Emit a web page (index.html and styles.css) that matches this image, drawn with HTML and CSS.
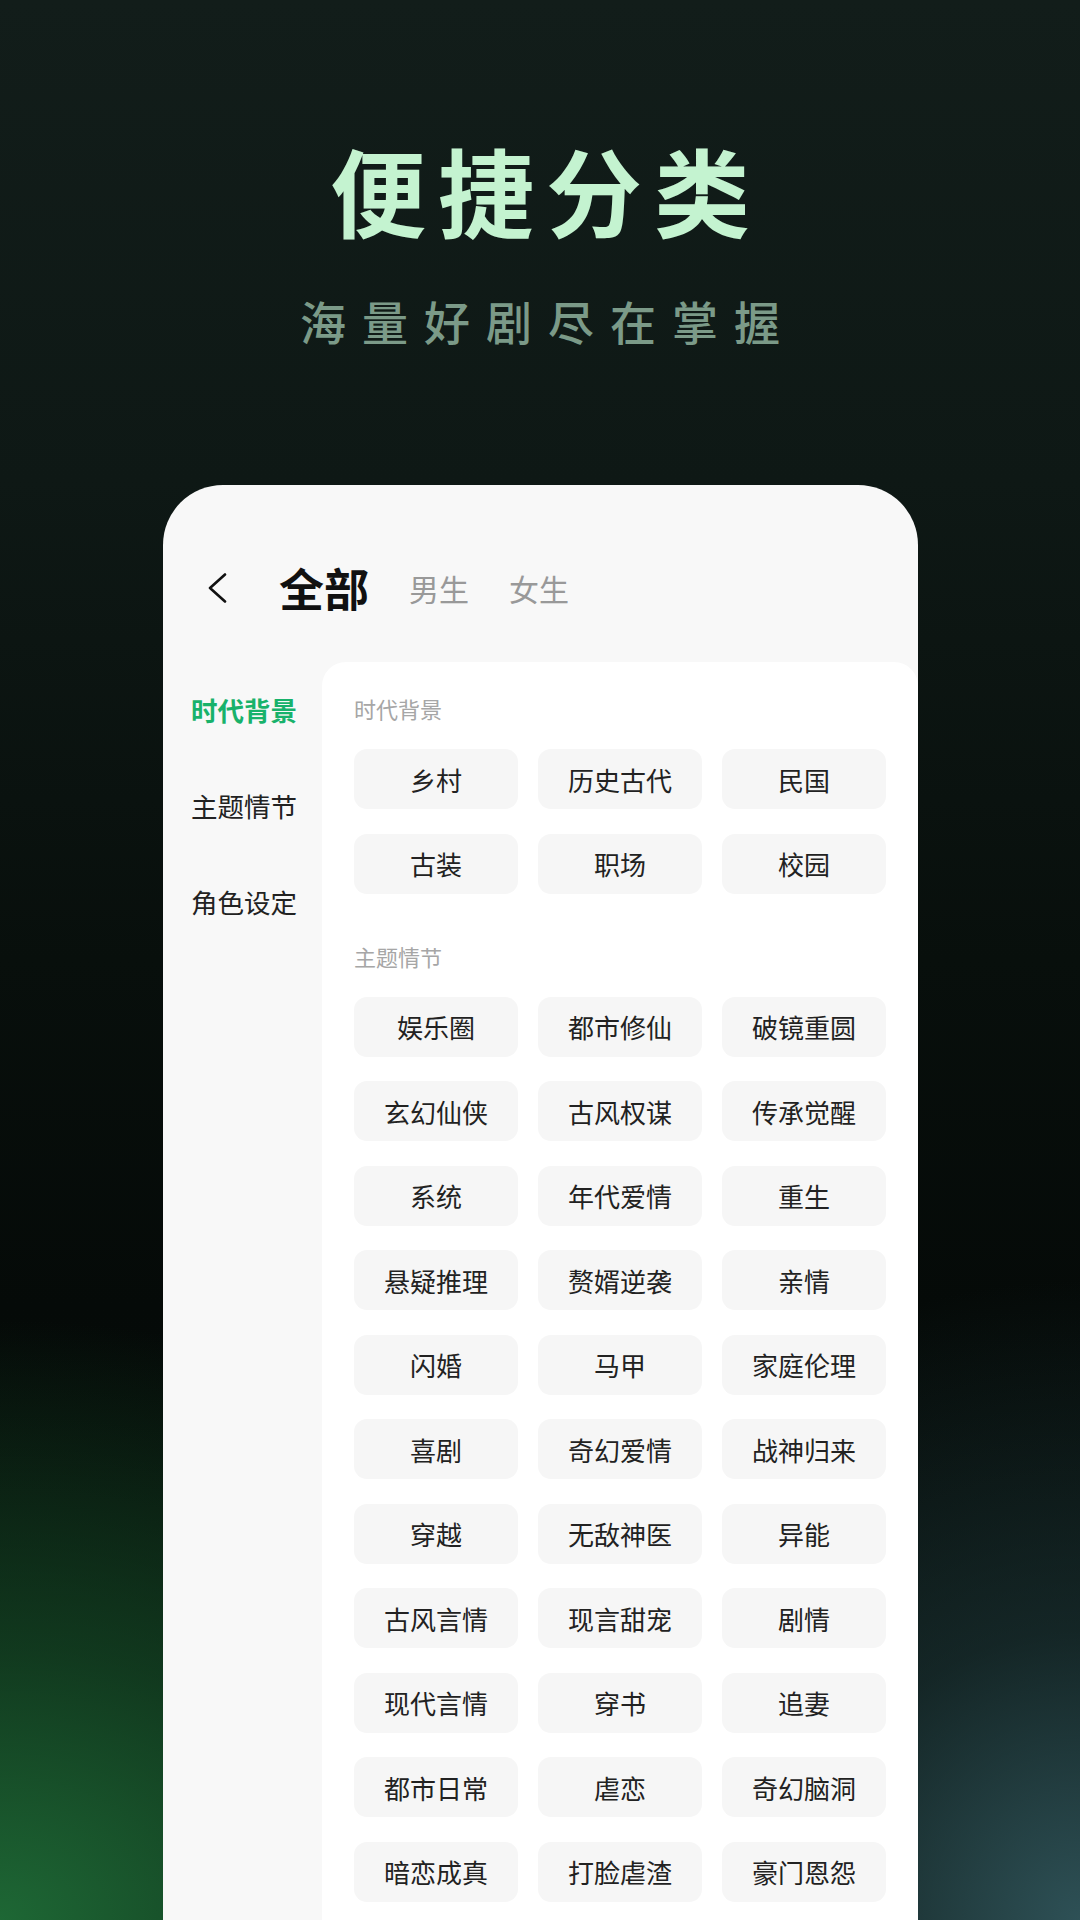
FILE: index.html
```html
<!DOCTYPE html>
<html lang="zh-CN">
<head>
<meta charset="utf-8">
<title>便捷分类</title>
<link rel="stylesheet" href="styles.css">
</head>
<body>
<div class="page">
  <header class="hero">
    <h1 class="title">便捷分类</h1>
    <p class="subtitle">海量好剧尽在掌握</p>
  </header>

  <section class="card">
    <div class="topbar">
      <svg class="back" viewBox="0 0 20 30" width="20" height="30" aria-hidden="true">
        <polyline points="18,1.5 3,15 18,28.5" fill="none" stroke="#111" stroke-width="2.6" stroke-linecap="round" stroke-linejoin="round"/>
      </svg>
      <span class="tab tab-active">全部</span>
      <span class="tab">男生</span>
      <span class="tab">女生</span>
    </div>

    <div class="content">
      <nav class="sidebar">
        <div class="side-item side-active">时代背景</div>
        <div class="side-item">主题情节</div>
        <div class="side-item">角色设定</div>
      </nav>

      <div class="panel">
        <div class="group">
          <div class="group-label">时代背景</div>
          <div class="chips">
            <div class="chip">乡村</div>
            <div class="chip">历史古代</div>
            <div class="chip">民国</div>
            <div class="chip">古装</div>
            <div class="chip">职场</div>
            <div class="chip">校园</div>
          </div>
        </div>

        <div class="group group-next">
          <div class="group-label">主题情节</div>
          <div class="chips">
            <div class="chip">娱乐圈</div>
            <div class="chip">都市修仙</div>
            <div class="chip">破镜重圆</div>
            <div class="chip">玄幻仙侠</div>
            <div class="chip">古风权谋</div>
            <div class="chip">传承觉醒</div>
            <div class="chip">系统</div>
            <div class="chip">年代爱情</div>
            <div class="chip">重生</div>
            <div class="chip">悬疑推理</div>
            <div class="chip">赘婿逆袭</div>
            <div class="chip">亲情</div>
            <div class="chip">闪婚</div>
            <div class="chip">马甲</div>
            <div class="chip">家庭伦理</div>
            <div class="chip">喜剧</div>
            <div class="chip">奇幻爱情</div>
            <div class="chip">战神归来</div>
            <div class="chip">穿越</div>
            <div class="chip">无敌神医</div>
            <div class="chip">异能</div>
            <div class="chip">古风言情</div>
            <div class="chip">现言甜宠</div>
            <div class="chip">剧情</div>
            <div class="chip">现代言情</div>
            <div class="chip">穿书</div>
            <div class="chip">追妻</div>
            <div class="chip">都市日常</div>
            <div class="chip">虐恋</div>
            <div class="chip">奇幻脑洞</div>
            <div class="chip">暗恋成真</div>
            <div class="chip">打脸虐渣</div>
            <div class="chip">豪门恩怨</div>
          </div>
        </div>
      </div>
    </div>
  </section>
</div>
</body>
</html>
```

FILE: styles.css
```css
* {
  box-sizing: border-box;
}

html, body {
  margin: 0;
  padding: 0;
}

body {
  width: 1080px;
  height: 1920px;
  overflow: hidden;
  font-family: "Noto Sans CJK SC", "Noto Sans", sans-serif;
  background-color: #070c0a;
  background-image:
    radial-gradient(ellipse 780px 600px at 0% 100%, rgba(31, 108, 55, 0.95) 0%, rgba(24, 86, 44, 0.6) 45%, rgba(10, 30, 18, 0) 100%),
    radial-gradient(ellipse 620px 640px at 100% 100%, rgba(48, 84, 90, 0.95) 0%, rgba(34, 62, 66, 0.5) 45%, rgba(15, 30, 30, 0) 100%),
    linear-gradient(180deg, #121d1a 0%, #0e1815 25%, #080f0c 50%, #050a08 68%, #07100b 100%);
}

.page {
  width: 1080px;
  height: 1920px;
  display: flex;
  flex-direction: column;
}

.hero {
  padding-top: 131px;
  display: flex;
  flex-direction: column;
  align-items: center;
}

.title {
  margin: 0;
  font-size: 96px;
  line-height: 115px;
  font-weight: 700;
  letter-spacing: 12px;
  padding-left: 12px;
  color: #c4f3d0;
}

.subtitle {
  margin: 44px 0 0;
  font-size: 46px;
  line-height: 60px;
  font-weight: 500;
  letter-spacing: 16px;
  padding-left: 16px;
  color: #7b9a88;
}

.card {
  margin: 135px 162px 0 163px;
  flex: 1;
  background: #f8f8f8;
  border-radius: 60px 60px 0 0;
  display: flex;
  flex-direction: column;
}

.topbar {
  margin-top: 71px;
  height: 64px;
  padding-left: 44px;
  display: flex;
  align-items: center;
}

.back {
  display: block;
  flex: none;
}

.tab {
  font-size: 30px;
  line-height: 40px;
  color: #999999;
  margin-left: 40px;
}

.tab-active {
  font-size: 45px;
  line-height: 60px;
  font-weight: 700;
  color: #111111;
  margin-left: 52px;
}

.content {
  margin-top: 42px;
  flex: 1;
  display: flex;
}

.sidebar {
  width: 159px;
  flex: none;
  padding: 28px 0 0 28px;
  display: flex;
  flex-direction: column;
  gap: 56px;
}

.side-item {
  font-size: 26.5px;
  line-height: 40px;
  color: #222222;
  white-space: nowrap;
}

.side-active {
  color: #18b26b;
  font-weight: 700;
}

.panel {
  flex: 1;
  background: #ffffff;
  border-radius: 24px 24px 0 0;
  padding: 30px 30px 0 32px;
}

.group-label {
  font-size: 22px;
  line-height: 32px;
  color: #a6a6a6;
  margin-bottom: 25px;
}

.group-next {
  margin-top: 46px;
}

.chips {
  display: grid;
  grid-template-columns: repeat(3, 164px);
  grid-auto-rows: 60px;
  column-gap: 20px;
  row-gap: 24.5px;
}

.chip {
  background: #f6f6f6;
  border-radius: 13px;
  display: flex;
  align-items: center;
  justify-content: center;
  font-size: 26px;
  color: #222222;
  white-space: nowrap;
}
```
